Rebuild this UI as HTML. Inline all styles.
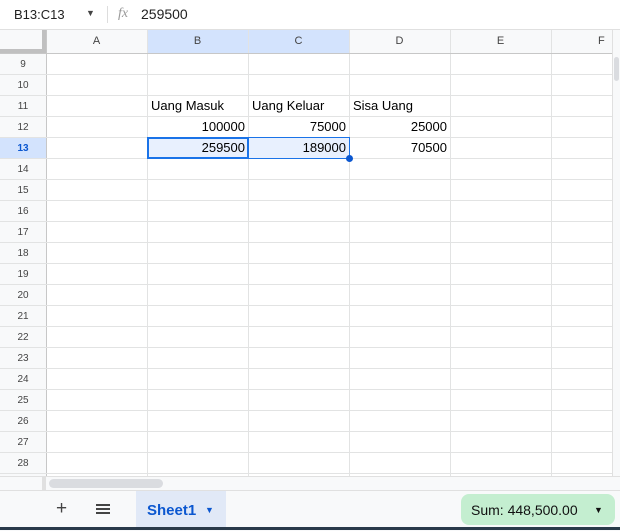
<html><head><style>
body{margin:0;width:620px;height:530px;overflow:hidden;background:#fff;font-family:"Liberation Sans",Arial,sans-serif;position:relative}
.a{position:absolute}
.hl{position:absolute;left:0;width:612px;height:1px;background:#e2e3e3}
.vl{position:absolute;top:30px;height:446px;width:1px;background:#e2e3e3}
.rn{position:absolute;left:0;width:46px;text-align:center;font-size:10px;color:#444}
.cn{position:absolute;top:30px;height:23px;line-height:23px;text-align:center;font-size:11px;color:#444;width:101px}
.t{position:absolute;font-size:13px;color:#000;height:21px;line-height:22px}
.r{text-align:right;width:96px}
</style></head><body>
<div class="a" style="left:0;top:0;width:620px;height:29px;background:#fff;border-bottom:1px solid #e0e0e0"></div>
<div class="a" style="left:14px;top:7px;font-size:13px;color:#222">B13:C13</div>
<div class="a" style="left:86px;top:8px;font-size:9px;color:#444">▼</div>
<div class="a" style="left:107px;top:6px;width:1px;height:17px;background:#ddd"></div>
<div class="a" style="left:118px;top:6px;font-size:14px;font-style:italic;color:#999;font-family:'Liberation Serif',serif">fx</div>
<div class="a" style="left:141px;top:6px;font-size:14px;color:#222">259500</div>
<div class="a" style="left:0;top:30px;width:612px;height:23px;background:#f8f9fa"></div>
<div class="a" style="left:0;top:30px;width:46px;height:446px;background:#f8f9fa"></div>
<div class="a" style="left:0;top:30px;width:46px;height:23px;background:#f8f9fa;border-right:4px solid #c0c0c0;border-bottom:4px solid #c0c0c0;box-sizing:border-box"></div>
<div class="a" style="left:147px;top:30px;width:202px;height:23px;background:#d3e3fd"></div>
<div class="a" style="left:0;top:137px;width:46px;height:21px;background:#d3e3fd"></div>
<div class="a" style="left:148px;top:138px;width:201px;height:20px;background:#e8f0fe"></div>
<div class="cn" style="left:46px">A</div><div class="cn" style="left:147px">B</div><div class="cn" style="left:248px">C</div><div class="cn" style="left:349px">D</div><div class="cn" style="left:450px">E</div><div class="cn" style="left:551px;width:101px;text-align:left;padding-left:47px;box-sizing:border-box">F</div>
<div class="vl" style="left:46px;background:#c7c7c7"></div>
<div class="vl" style="left:147px"></div><div class="vl" style="left:248px"></div><div class="vl" style="left:349px"></div><div class="vl" style="left:450px"></div><div class="vl" style="left:551px"></div>
<div class="hl" style="top:53px;background:#c7c7c7"></div>
<div id="rows"></div>
<script>
var s='';for(var i=0;i<20;i++){var y=53+i*21;s+='<div class="hl" style="top:'+(y+21)+'px"></div><div class="rn" style="top:'+(y+6)+'px;'+(i==4?'font-weight:bold;color:#0b57d0':'')+'">'+(9+i)+'</div>';}
document.getElementById('rows').innerHTML=s;
</script>
<div class="t" style="left:151px;top:95px">Uang Masuk</div>
<div class="t" style="left:252px;top:95px">Uang Keluar</div>
<div class="t" style="left:353px;top:95px">Sisa Uang</div>
<div class="t r" style="left:149px;top:116px">100000</div>
<div class="t r" style="left:250px;top:116px">75000</div>
<div class="t r" style="left:351px;top:116px">25000</div>
<div class="t r" style="left:149px;top:137px">259500</div>
<div class="t r" style="left:250px;top:137px">189000</div>
<div class="t r" style="left:351px;top:137px">70500</div>
<div class="a" style="left:147px;top:137px;width:203px;height:22px;border:1px solid #1a73e8;box-sizing:border-box"></div>
<div class="a" style="left:147px;top:137px;width:102px;height:22px;border:2px solid #1a73e8;box-sizing:border-box"></div>
<div class="a" style="left:346px;top:155px;width:7px;height:7px;border-radius:50%;background:#0b57d0"></div>
<div class="a" style="left:612px;top:30px;width:8px;height:446px;background:#f8f9fa;border-left:1px solid #e0e0e0"></div>
<div class="a" style="left:614px;top:57px;width:5px;height:24px;border-radius:3px;background:#dadce0"></div>
<div class="a" style="left:0;top:476px;width:620px;height:14px;background:#f8f9fa;border-top:1px solid #e0e0e0"></div>
<div class="a" style="left:42px;top:477px;width:4px;height:13px;background:#e0e0e0"></div>
<div class="a" style="left:49px;top:479px;width:114px;height:9px;border-radius:5px;background:#dadce0"></div>
<div class="a" style="left:0;top:490px;width:620px;height:40px;background:#f8f9fa;border-top:1px solid #e0e0e0"></div>
<div class="a" style="left:56px;top:498px;font-size:19px;color:#444">+</div>
<div class="a" style="left:96px;top:504px;width:14px;height:2px;background:#444;box-shadow:0 4px 0 #444,0 8px 0 #444"></div>
<div class="a" style="left:136px;top:491px;width:90px;height:37px;background:#e1e9f7"></div>
<div class="a" style="left:147px;top:502px;font-size:15px;font-weight:bold;color:#0b57d0">Sheet1</div>
<div class="a" style="left:205px;top:505px;font-size:9px;color:#0b57d0">▼</div>
<div class="a" style="left:461px;top:494px;width:154px;height:31px;border-radius:8px;background:#c4eed0"></div>
<div class="a" style="left:471px;top:502px;font-size:14px;color:#111">Sum: 448,500.00</div>
<div class="a" style="left:594px;top:505px;font-size:9px;color:#111">▼</div>
<div class="a" style="left:0;top:527px;width:620px;height:3px;background:#2a3a4a"></div>
</body></html>
